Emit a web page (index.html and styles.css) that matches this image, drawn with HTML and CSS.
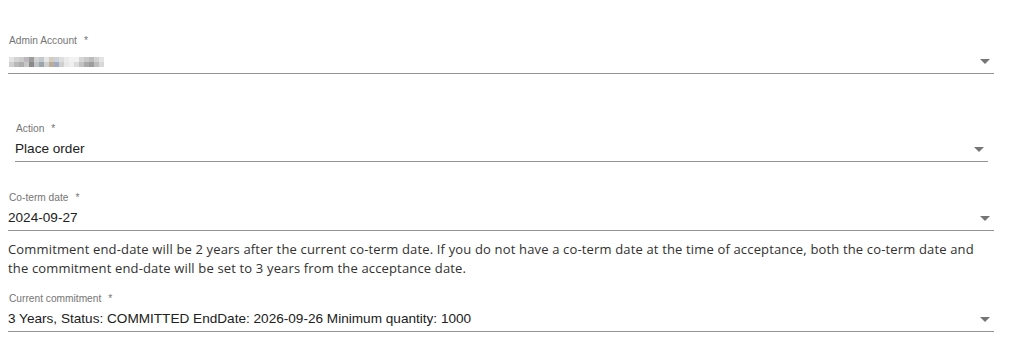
FILE: index.html
```html
<!DOCTYPE html>
<html lang="en">
<head>
<meta charset="utf-8">
<title>Order form</title>
<link rel="stylesheet" href="styles.css">
</head>
<body>
<main class="form">
  <div class="field field-first">
    <label class="field-label">Admin Account<span class="req">*</span></label>
    <div class="field-value">
      <span class="blurred" aria-label="hidden account"></span>
      <span class="arrow"></span>
    </div>
  </div>

  <div class="nested">
    <div class="field">
      <label class="field-label">Action<span class="req">*</span></label>
      <div class="field-value">
        <span class="value-text">Place order</span>
        <span class="arrow"></span>
      </div>
    </div>
  </div>

  <div class="field field-coterm">
    <label class="field-label">Co-term date<span class="req">*</span></label>
    <div class="field-value">
      <span class="value-text">2024-09-27</span>
      <span class="arrow"></span>
    </div>
  </div>

  <p class="hint">Commitment end-date will be 2 years after the current co-term date. If you do not have a co-term date at the time of acceptance, both the co-term date and the commitment end-date will be set to 3 years from the acceptance date.</p>

  <div class="field field-commit">
    <label class="field-label">Current commitment<span class="req">*</span></label>
    <div class="field-value">
      <span class="value-text">3 Years, Status: COMMITTED EndDate: 2026-09-26 Minimum quantity: 1000</span>
      <span class="arrow"></span>
    </div>
  </div>
</main>
</body>
</html>
```

FILE: styles.css
```css
* { box-sizing: border-box; }

html, body {
  margin: 0;
  padding: 0;
  background: #ffffff;
}

.form {
  width: 994px;
  padding: 35px 0 0 8px;
  font-family: "Liberation Sans", Arial, sans-serif;
}

.field {
  display: flex;
  flex-direction: column;
  border-bottom: 1px solid #949494;
  padding-bottom: 2px;
}

.field-label {
  display: block;
  font-size: 10.2px;
  line-height: 12px;
  height: 12px;
  margin-bottom: 4px;
  margin-left: 1px;
  color: #757575;
  white-space: nowrap;
}

.req {
  margin-left: 7px;
}

.field-value {
  display: flex;
  align-items: center;
  justify-content: space-between;
  height: 20px;
  font-size: 13.6px;
  line-height: 20px;
  color: #212121;
}

.value-text {
  white-space: nowrap;
}

.arrow {
  width: 0;
  height: 0;
  margin-top: 1px;
  margin-right: 4px;
  border-left: 5px solid transparent;
  border-right: 5px solid transparent;
  border-top: 5px solid #757575;
}

.nested {
  margin-top: 49px;
  padding: 0 6px 0 7px;
}

.field-coterm {
  margin-top: 30px;
}

.hint {
  margin: 9px 0 0 0;
  font-family: "Open Sans", "Noto Sans", sans-serif;
  font-size: 13px;
  line-height: 19px;
  letter-spacing: 0.155px;
  color: #323130;
}

.field-commit {
  margin-top: 15px;
}

.blurred {
  display: block;
  width: 95px;
  height: 10px;
  margin-top: 1px;
  margin-left: 1px;
  background-image:
    linear-gradient(to right,
      #e4e4e4 0 5px, #d4d4d4 5px 10px, #cccccc 10px 15px, #bdb8bd 15px 20px,
      #9c9c9c 20px 25px, #d2d2d2 25px 30px, #c4c9ce 30px 35px, #e6e6e6 35px 40px,
      #d4ccc0 40px 45px, #ccd2dc 45px 50px, #dedede 50px 55px, #ebebeb 55px 60px,
      #f2f2f2 60px 65px, #f2f2f2 65px 70px, #d6d6d6 70px 75px, #c9c9c9 75px 80px,
      #bcbcbc 80px 85px, #d2d2d2 85px 90px, #e4e4e4 90px 95px),
    linear-gradient(to right,
      #cfcfcf 0 5px, #b8b8b8 5px 10px, #adadad 10px 15px, #c6c6c6 15px 20px,
      #8a8a8a 20px 25px, #bec3c3 25px 30px, #9ca5aa 30px 35px, #cfcfcf 35px 40px,
      #bbae98 40px 45px, #a0abc2 45px 50px, #cfcfcf 50px 55px, #e8e8e8 55px 60px,
      #efefef 60px 65px, #dcdcdc 65px 70px, #c2c2c2 70px 75px, #a9a9a9 75px 80px,
      #9d9d9d 80px 85px, #bebebe 85px 90px, #d8d8d8 90px 95px);
  background-size: 95px 5px, 95px 5px;
  background-position: 0 0, 0 5px;
  background-repeat: no-repeat;
}
```
